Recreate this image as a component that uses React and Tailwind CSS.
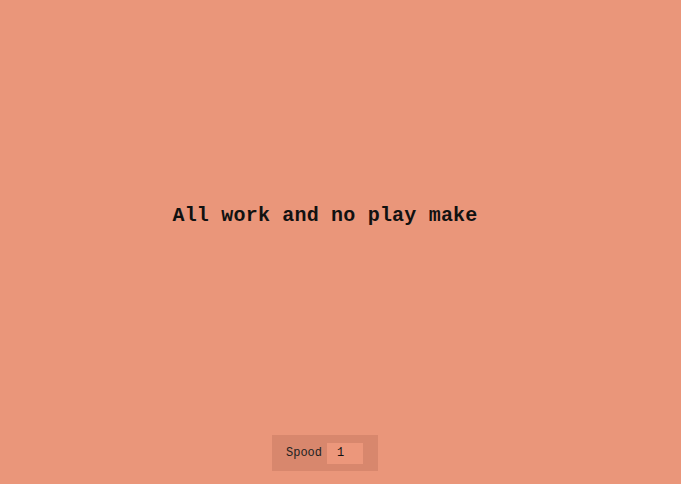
import React, { useState } from 'react';

const App = () => {
  const [speed, setSpeed] = useState('1');

  return (
    <div className="h-[484px] w-full bg-[#ea967a] overflow-hidden" style={{ fontFamily: '"Liberation Mono", "DejaVu Sans Mono", monospace' }}>
      <div className="w-[650px] h-full flex flex-col items-center">
        {/* Typed line */}
        <div className="flex-1 flex items-center">
          <p className="text-[20px] font-bold text-[#111] tracking-[0.2px] mb-[4px]">
            All work and no play make
          </p>
        </div>

        {/* Speed control */}
        <div className="mb-[13px] w-[106px] h-[36px] bg-[#d8876d] flex items-center pl-[14px] gap-[5px]">
          <span className="text-[12px] text-[#222]">Spood</span>
          <input
            type="text"
            value={speed}
            onChange={(e) => setSpeed(e.target.value)}
            className="w-[36px] h-[21px] bg-[#ec977b] px-[10px] text-[12px] text-[#111] outline-none"
          />
        </div>
      </div>
    </div>
  );
};

export default App;
